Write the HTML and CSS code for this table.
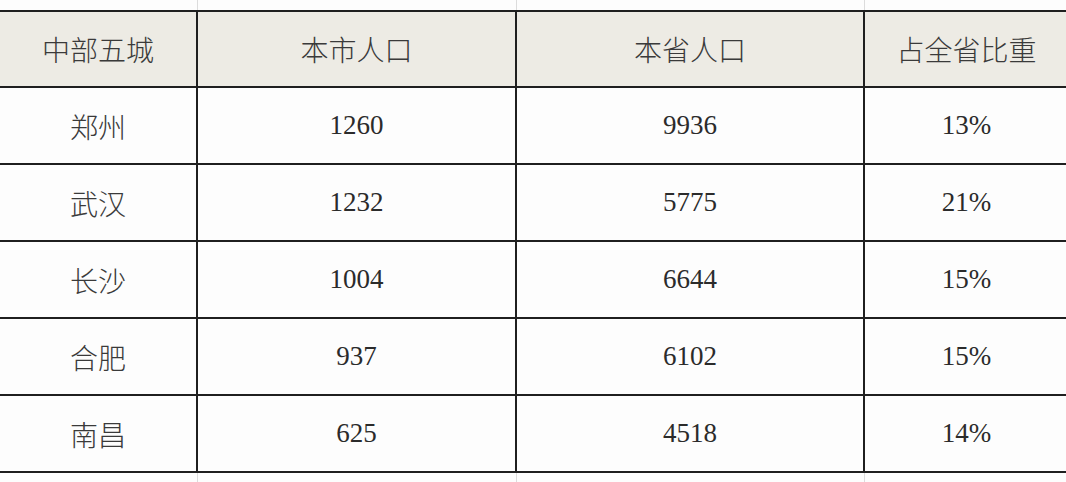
FILE: index.html
```html
<!DOCTYPE html>
<html lang="zh-CN">
<head>
<meta charset="utf-8">
<title>中部五城人口</title>
<link rel="stylesheet" href="styles.css">
</head>
<body>
<div class="sheet">
  <div class="gap"></div><div class="gap"></div><div class="gap"></div><div class="gap"></div>

  <div class="cell head">中部五城</div>
  <div class="cell head">本市人口</div>
  <div class="cell head">本省人口</div>
  <div class="cell head">占全省比重</div>

  <div class="cell cn">郑州</div>
  <div class="cell num">1260</div>
  <div class="cell num">9936</div>
  <div class="cell num">13%</div>

  <div class="cell cn">武汉</div>
  <div class="cell num">1232</div>
  <div class="cell num">5775</div>
  <div class="cell num">21%</div>

  <div class="cell cn">长沙</div>
  <div class="cell num">1004</div>
  <div class="cell num">6644</div>
  <div class="cell num">15%</div>

  <div class="cell cn">合肥</div>
  <div class="cell num">937</div>
  <div class="cell num">6102</div>
  <div class="cell num">15%</div>

  <div class="cell cn">南昌</div>
  <div class="cell num">625</div>
  <div class="cell num">4518</div>
  <div class="cell num">14%</div>

  <div class="gap"></div><div class="gap"></div><div class="gap"></div><div class="gap"></div>
</div>
</body>
</html>
```

FILE: styles.css
```css
html, body {
  margin: 0;
  padding: 0;
  background: #fdfdfd;
  overflow: hidden;
  width: 1066px;
  height: 482px;
}

.sheet {
  display: grid;
  width: 1070px;
  grid-template-columns: 198px 319px 348px 205px;
  grid-template-rows: 10px 78px repeat(5, 77px) 20px;
}

.gap {
  border-right: 1px solid #dcdcdc;
}
.gap:nth-child(4n+1) { margin-right: 0; }

.cell {
  display: flex;
  align-items: center;
  justify-content: center;
  border-right: 2px solid #1f1f1f;
  border-bottom: 2px solid #1f1f1f;
  background: #fdfdfd;
  color: #2b2b2b;
  font-family: "Liberation Serif", "Noto Sans CJK SC", serif;
}

.head {
  border-top: 2px solid #1f1f1f;
  background: #edebe4;
  color: #3a3a3a;
  font-family: "Noto Sans CJK SC", sans-serif;
  font-weight: 300;
  font-size: 28px;
}

.cn {
  font-family: "Noto Sans CJK SC", sans-serif;
  font-weight: 300;
  font-size: 28px;
  color: #3a3a3a;
}

.num {
  font-size: 27px;
}
```
